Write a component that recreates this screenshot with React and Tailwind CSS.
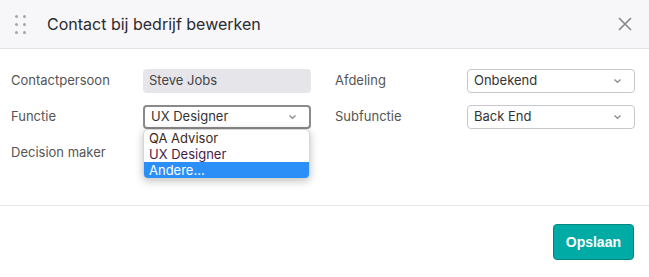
import React from "react";

function Chevron() {
  return (
    <svg width="9" height="6" viewBox="0 0 9 6" className="text-[#8e8e96]">
      <path d="M1.5 1.5 L4.5 4.2 L7.5 1.5" fill="none" stroke="currentColor" strokeWidth="1.4" />
    </svg>
  );
}

function Select({ value, focused }) {
  return (
    <div
      className={
        "flex items-center justify-between h-[24px] w-[168px] pl-[6px] pr-[12px] rounded-[4px] bg-white text-[13px] text-[#333] " +
        (focused ? "border-2 border-[#8a8a8a] pl-[5px]" : "border border-[#c8c8cc]")
      }
    >
      <span>{value}</span>
      <Chevron />
    </div>
  );
}

export default function App() {
  return (
    <div className="w-[649px] h-[277px] bg-white font-['Inter','Noto_Sans',sans-serif] text-[#333] overflow-hidden">
      <div className="flex items-center h-[49px] bg-[#f7f7f9] border-b border-[#e3e3e6] pl-[15px] pr-[16px]">
        <div className="grid grid-cols-2 gap-x-[5px] gap-y-[5px] mr-[21px]">
          {[0, 1, 2, 3, 4, 5].map((i) => (
            <span key={i} className="w-[3px] h-[3px] rounded-full bg-[#a5a5ad]" />
          ))}
        </div>
        <h1 className="text-[16px] text-[#2b2b30] flex-1">Contact bij bedrijf bewerken</h1>
        <svg width="16" height="16" viewBox="0 0 16 16" className="text-[#85858f]">
          <path d="M2 2 L14 14 M14 2 L2 14" stroke="currentColor" strokeWidth="1.6" />
        </svg>
      </div>

      <div className="h-[157px] border-b border-[#e5e5e8] pt-[20px] pl-[11px] text-[13px]">
        <div className="flex h-[24px] items-center">
          <span className="w-[132px] text-[#555]">Contactpersoon</span>
          <div className="flex items-center h-[24px] w-[168px] pl-[6px] rounded-[4px] bg-[#e6e6ea] text-[#444]">
            Steve Jobs
          </div>
          <span className="ml-[24px] w-[132px] text-[#555]">Afdeling</span>
          <Select value="Onbekend" />
        </div>
        <div className="flex h-[24px] items-center mt-[12px]">
          <span className="w-[132px] text-[#555]">Functie</span>
          <div className="relative">
            <Select value="UX Designer" focused />
            <div className="absolute left-0 top-[24px] w-[167px] bg-white rounded-[5px] shadow-[0_2px_8px_rgba(0,0,0,0.25)] border border-[#d6d6d6] overflow-hidden text-[13px] leading-[16px] z-10">
              <div className="pl-[5px] text-[#3b2a16]">QA Advisor</div>
              <div className="pl-[5px] text-[#4a1a48]">UX Designer</div>
              <div className="pl-[5px] bg-[#2b8ff7] text-white">Andere...</div>
            </div>
          </div>
          <span className="ml-[24px] w-[132px] text-[#555]">Subfunctie</span>
          <Select value="Back End" />
        </div>
        <div className="flex h-[24px] items-center mt-[12px]">
          <span className="w-[132px] text-[#555]">Decision maker</span>
        </div>
      </div>

      <div className="flex justify-end pr-[15px] pt-[18px]">
        <button className="h-[36px] px-[12px] rounded-[4px] bg-[#00aaa5] border border-[#00857f] text-white font-bold text-[14px] font-['Liberation_Sans',Arial,sans-serif]">
          Opslaan
        </button>
      </div>
    </div>
  );
}
